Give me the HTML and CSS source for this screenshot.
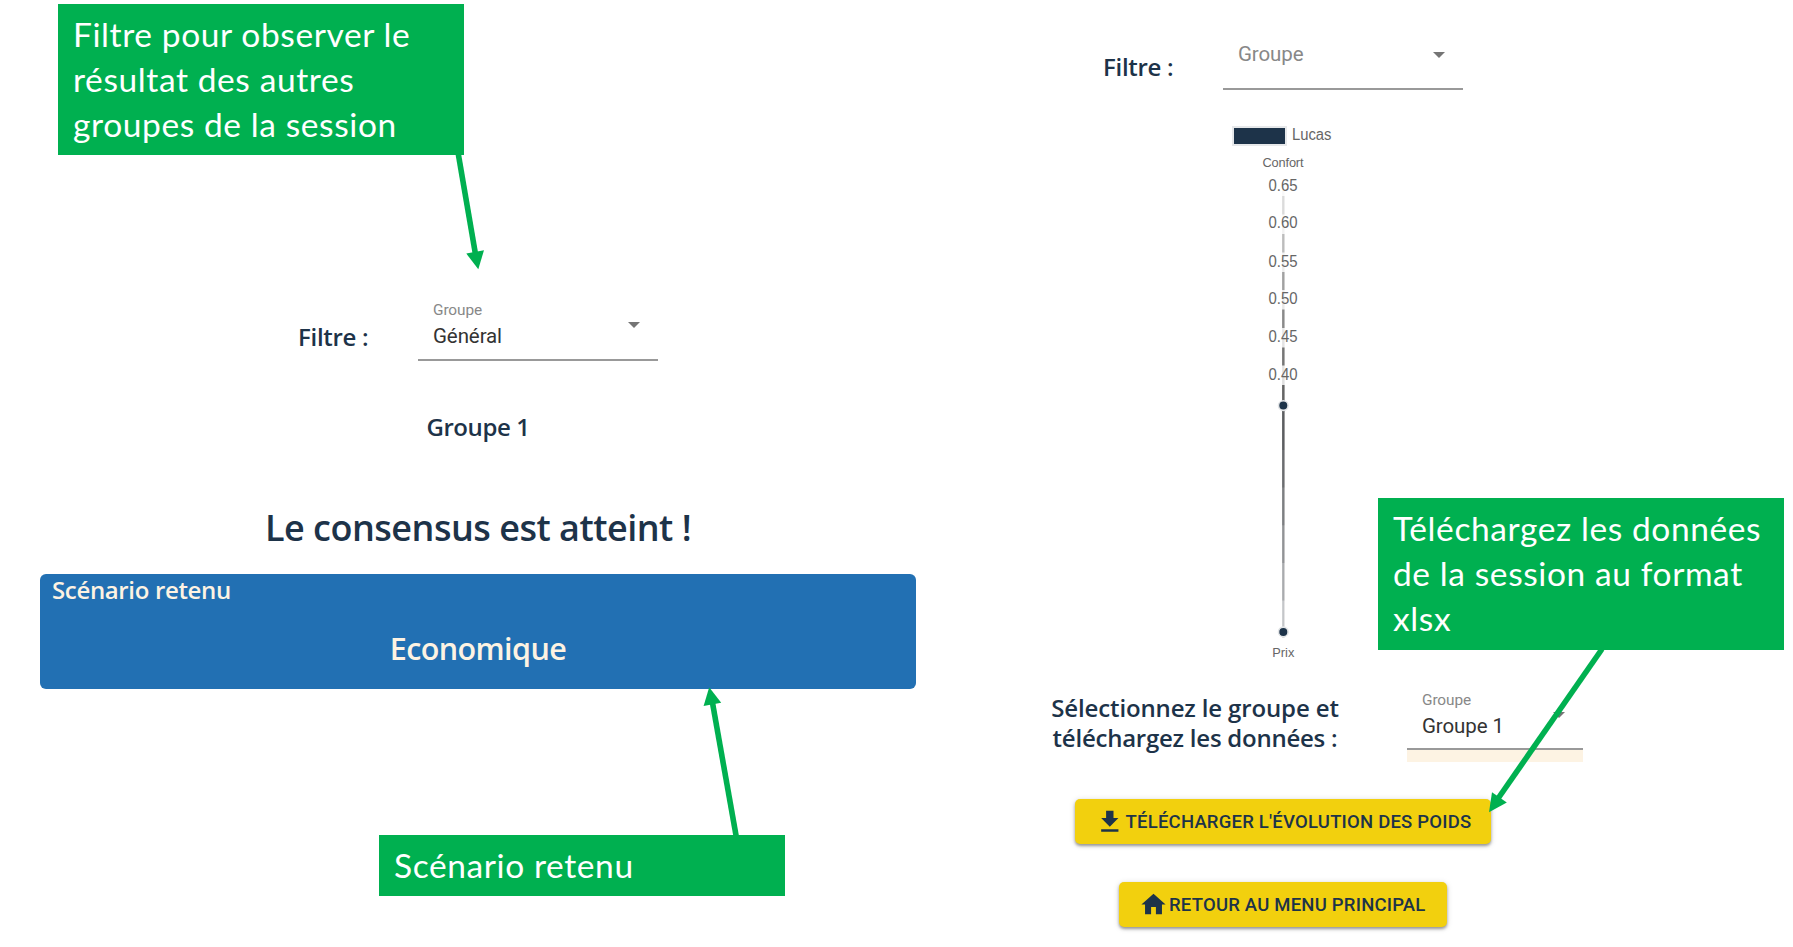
FILE: index.html
```html
<!DOCTYPE html>
<html lang="fr">
<head>
<meta charset="utf-8">
<title>Résultats de la session</title>
<link rel="stylesheet" href="styles.css">
</head>
<body>
<div class="page">
  <main class="result">
    <div class="filter-row">
      <span class="label filter-label">Filtre :</span>
      <div class="select">
        <span class="select-name">Groupe</span>
        <span class="select-value">Général</span>
        <i class="caret"></i>
      </div>
    </div>
    <h2 class="label group-title">Groupe 1</h2>
    <h1 class="consensus">Le consensus est atteint !</h1>
    <section class="scenario">
      <div class="scenario-head">Scénario retenu</div>
      <div class="scenario-name">Economique</div>
    </section>
  </main>

  <aside class="weights">
    <div class="filter-row">
      <span class="label filter-label">Filtre :</span>
      <div class="select">
        <span class="select-placeholder">Groupe</span>
        <i class="caret"></i>
      </div>
    </div>

    <svg class="chart" width="200" height="560" viewBox="1183 110 200 560">
      <rect x="1232" y="126" width="55" height="20" fill="#e6e8ea"/>
      <rect x="1234" y="128" width="51" height="16" fill="#1d3349"/>
      <text class="tick" x="1292" y="139.5" textLength="39.5" lengthAdjust="spacingAndGlyphs">Lucas</text>
      <g stroke="#000" stroke-width="2.4" stroke-opacity=".14">
        <path d="M1283.3 186V638"/>
        <path d="M1283.3 223.7V600.5"/>
        <path d="M1283.3 261.3V563"/>
        <path d="M1283.3 299V525.3"/>
        <path d="M1283.3 336.7V487.5"/>
        <path d="M1283.3 374.3V450"/>
      </g>
      <g fill="#fff" fill-opacity=".8">
        <rect x="1267" y="175.5" width="32" height="20.5"/>
        <rect x="1267" y="214.5" width="32" height="19.5"/>
        <rect x="1267" y="252.5" width="32" height="19.5"/>
        <rect x="1267" y="290" width="32" height="19.5"/>
        <rect x="1267" y="328" width="32" height="19.5"/>
        <rect x="1267" y="365.5" width="32" height="19.5"/>
      </g>
      <path d="M1283.3 405.6V632" stroke="#1d3349" stroke-width="2" stroke-opacity=".12"/>
      <g class="tick">
        <text x="1268.5" y="190.7" textLength="29" lengthAdjust="spacingAndGlyphs">0.65</text>
        <text x="1268.5" y="228" textLength="29" lengthAdjust="spacingAndGlyphs">0.60</text>
        <text x="1268.5" y="266.8" textLength="29" lengthAdjust="spacingAndGlyphs">0.55</text>
        <text x="1268.5" y="304.3" textLength="29" lengthAdjust="spacingAndGlyphs">0.50</text>
        <text x="1268.5" y="342" textLength="29" lengthAdjust="spacingAndGlyphs">0.45</text>
        <text x="1268.5" y="379.6" textLength="29" lengthAdjust="spacingAndGlyphs">0.40</text>
      </g>
      <g class="axis" text-anchor="middle">
        <text x="1283" y="167" textLength="41">Confort</text>
        <text x="1283.3" y="657">Prix</text>
      </g>
      <g fill="#1d3349" stroke="#e3e5e7" stroke-width="1.6">
        <circle cx="1283.3" cy="405.6" r="4.8"/>
        <circle cx="1283.3" cy="631.9" r="4.8"/>
      </g>
    </svg>

    <div class="download-row">
      <p class="label download-label">Sélectionnez le groupe et<br><span class="tight">téléchargez les données :</span></p>
      <div class="select-wrap">
        <div class="select narrow">
          <span class="select-name">Groupe</span>
          <span class="select-value">Groupe 1</span>
          <i class="caret"></i>
        </div>
      </div>
    </div>

    <button class="btn btn-download">
      <svg width="29.6" height="29.6" viewBox="0 0 24 24"><path fill="#1d3349" d="M19 9h-4V3H9v6H5l7 7 7-7zM5 18v2h14v-2H5z"/></svg>
      <span>TÉLÉCHARGER L'ÉVOLUTION DES POIDS</span>
    </button>
    <button class="btn btn-home">
      <svg width="29" height="29" viewBox="0 0 24 24"><path fill="#1d3349" d="M10 20v-6h4v6h5v-8h3L12 3 2 12h3v8z"/></svg>
      <span>RETOUR AU MENU PRINCIPAL</span>
    </button>
  </aside>

  <svg class="arrows" width="1793" height="947" viewBox="0 0 1793 947">
    <g stroke="#00b050" stroke-width="5.6">
      <path d="M457.6 150L475.8 256"/>
      <path d="M736.5 838L712 700"/>
      <path d="M1602 649L1497 800"/>
    </g>
    <g fill="#00b050">
      <path d="M466.3 253.6L484 250.2L478.3 269.2z"/>
      <path d="M703.6 706L721.2 702.8L709.2 687.3z"/>
      <path d="M1492 792.2L1506.8 802.6L1489 812.2z"/>
    </g>
  </svg>
  <div class="callout callout-filter">Filtre pour observer le<br>résultat des autres<br>groupes de la session</div>
  <div class="callout callout-scenario">Scénario retenu</div>
  <div class="callout callout-export">Téléchargez les données<br>de la session au format<br>xlsx</div>
</div>
</body>
</html>
```
FILE: styles.css
```css
* { box-sizing: border-box; }
body { margin: 0; background: #fff; }
.page {
  position: relative;
  display: flex;
  width: 1793px;
  height: 947px;
  overflow: hidden;
  font-family: "Open Sans", "Noto Sans", sans-serif;
  color: #1d3349;
}
.result { width: 876px; margin-left: 40px; padding-top: 291px; }
.weights {
  display: flex;
  flex-direction: column;
  align-items: center;
  width: 734px;
  padding-top: 21px;
}
.label {
  margin: 0;
  font-size: 24px;
  font-weight: 600;
  line-height: 30px;
  letter-spacing: -.14px;
  white-space: nowrap;
}
.filter-row { display: flex; justify-content: center; height: 69px; }
.filter-label { width: 120px; padding-top: 31px; letter-spacing: -.3px; }

.select {
  position: relative;
  display: flex;
  flex-direction: column;
  width: 240px;
  height: 69px;
  padding: 9px 15px 0;
  border-bottom: 2px solid #999;
  font-family: Roboto, sans-serif;
  letter-spacing: -.1px;
  white-space: nowrap;
}
.result .select { height: 70px; }
.select-name { font-size: 15.4px; line-height: 20px; color: #888; }
.select-value { font-size: 20.5px; line-height: 26px; margin-top: 3px; color: #333; }
.select-placeholder { font-size: 20.5px; line-height: 26px; margin-top: 11px; color: #888; }
.caret {
  position: absolute;
  right: 18px;
  top: 31px;
  border: 6px solid transparent;
  border-top: 6.5px solid #757575;
  border-bottom: 0;
}
.select.narrow { width: 176px; }
.select-wrap { margin-left: 68px; padding-bottom: 12px; background: linear-gradient(#fff 69px, #fdf3e3 69px); }

.group-title { margin-top: 52px; text-align: center; letter-spacing: -.4px; }
.consensus {
  margin: 62px 0 0;
  font-size: 36px;
  font-weight: 600;
  line-height: 48px;
  letter-spacing: -.5px;
  text-align: center;
  white-space: nowrap;
}
.scenario {
  height: 115px;
  margin-top: 22px;
  border-radius: 6px;
  background: #2270b3;
  color: #fdf3e3;
  font-weight: 600;
}
.scenario-head { padding: 1px 0 0 12px; font-size: 24px; line-height: 30px; letter-spacing: -.35px; }
.scenario-name { margin-top: 23px; font-size: 30.5px; line-height: 40px; letter-spacing: -.6px; text-align: center; }

.chart { display: block; margin-top: 20px; font-family: "Liberation Sans", Arial, sans-serif; }
.tick { font-size: 16px; fill: #666; }
.axis { font-size: 12.8px; fill: #666; }

.download-row { display: flex; align-self: flex-start; margin: 11px 0 0 135px; }
.download-label { width: 288px; padding-top: 12px; text-align: center; }
.tight { letter-spacing: -.24px; }

.btn {
  display: flex;
  align-items: center;
  gap: 1px;
  height: 45px;
  padding: 0 0 0 20px;
  border: 0;
  border-radius: 5px;
  background: #f2d00e;
  box-shadow: 0 2px 3px rgba(0, 0, 0, .35), 0 1px 6px rgba(0, 0, 0, .15);
  color: #1d3349;
  font-family: Roboto, sans-serif;
  font-size: 18.5px;
  font-weight: 500;
  letter-spacing: .21px;
  white-space: nowrap;
}
.btn-download { width: 416px; margin-top: 37px; }
.btn-home { width: 328px; margin-top: 38px; }

.arrows { position: absolute; left: 0; top: 0; }
.callout {
  position: absolute;
  width: 406px;
  padding: 8px 15px;
  background: #00b050;
  color: #fff;
  font-family: Lato, Carlito, sans-serif;
  font-size: 33.5px;
  line-height: 45px;
  letter-spacing: .6px;
  white-space: nowrap;
}
.callout-filter { left: 58px; top: 4px; height: 151px; }
.callout-scenario { left: 379px; top: 835px; height: 61px; }
.callout-export { left: 1378px; top: 498px; height: 152px; }
```
